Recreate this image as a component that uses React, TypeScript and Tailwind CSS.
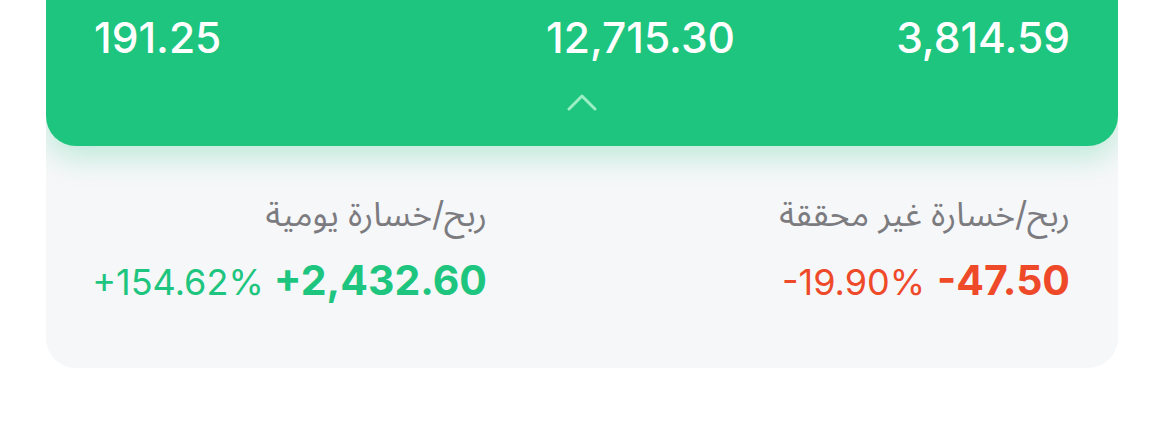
import React from "react";

function ChevronUp() {
  return (
    <svg width="32" height="18" viewBox="0 0 32 18" fill="none">
      <path d="M3 16 L16 3 L29 16" stroke="rgba(210,255,230,0.7)" strokeWidth="3" strokeLinecap="round" strokeLinejoin="round" />
    </svg>
  );
}

export default function App() {
  return (
    <div className="w-[1166px] h-[435px] bg-white overflow-hidden pl-[46px]" style={{ fontFamily: "Inter, 'Noto Sans Arabic', 'DejaVu Sans', sans-serif" }}>
      <div dir="rtl" className="w-[1072px] h-[368px] rounded-b-[30px] bg-[#f6f7f9] overflow-hidden">
        <div className="h-[146px] rounded-b-[30px] bg-[#1ec57f] shadow-[0_12px_28px_rgba(30,198,128,0.25)] px-[48px] pt-[13px] flex flex-col">
          <div className="grid grid-cols-[335px_335px_1fr] text-white font-medium text-[42.5px] leading-[50px]">
            <div className="flex justify-start"><span dir="ltr">3,814.59</span></div>
            <div className="flex justify-start"><span dir="ltr">12,715.30</span></div>
            <div className="flex justify-end"><span dir="ltr">191.25</span></div>
          </div>
          <div className="flex justify-center mt-[30px]">
            <ChevronUp />
          </div>
        </div>
        <div className="grid grid-cols-[583px_1fr] px-[48px] pt-[46px]">
          <div className="flex flex-col items-start">
            <div className="text-[34px] leading-[44px] text-[#7c7c80]">ربح/خسارة غير محققة</div>
            <div className="flex items-baseline gap-[12px] mt-[19px]">
              <span dir="ltr" className="text-[41px] leading-[50px] font-bold text-[#ee4a2a]">-47.50</span>
              <span dir="ltr" className="text-[36px] leading-[50px] text-[#ee4a2a]">-19.90%</span>
            </div>
          </div>
          <div className="flex flex-col items-start">
            <div className="text-[34px] leading-[44px] text-[#7c7c80]">ربح/خسارة يومية</div>
            <div className="flex items-baseline gap-[10px] mt-[19px]">
              <span dir="ltr" className="text-[41px] leading-[50px] font-bold text-[#1ec57f]">+2,432.60</span>
              <span dir="ltr" className="text-[36px] leading-[50px] text-[#1ec57f]">+154.62%</span>
            </div>
          </div>
        </div>
      </div>
    </div>
  );
}
